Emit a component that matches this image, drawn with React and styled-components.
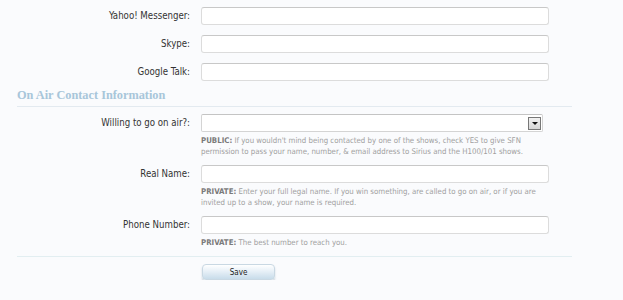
import React from 'react';
import styled, { createGlobalStyle } from 'styled-components';

const GlobalStyle = createGlobalStyle`
  body {
    margin: 0;
    background: #fafbfd;
    font-family: "DejaVu Sans Condensed", "Liberation Sans", sans-serif;
  }
`;

const Page = styled.div`
  width: 555px;
  padding: 7px 0 0 17px;
`;

const Row = styled.div`
  display: grid;
  grid-template-columns: 173px 348px;
  column-gap: 11px;
  align-items: start;
  margin-bottom: ${p => p.gap || 10}px;
`;

const Label = styled.label`
  grid-column: 1;
  text-align: right;
  font-size: 9.6px;
  line-height: 18px;
  color: #333;
`;

const Input = styled.input`
  grid-column: 2;
  box-sizing: border-box;
  width: 348px;
  height: 18px;
  margin: 0;
  border: 1px solid #dcdcdc;
  border-top-color: #c8c8c8;
  border-radius: 3px;
  background: #fff;
  outline: none;
`;

const SelectBox = styled.div`
  grid-column: 2;
  box-sizing: border-box;
  width: 342px;
  height: 18px;
  border: 1px solid #d4d4d4;
  border-top-color: #c4c4c4;
  border-radius: 2px;
  background: #fff;
  display: flex;
  justify-content: flex-end;
  align-items: center;
  padding-right: 1px;
`;

const Arrow = styled.div`
  box-sizing: border-box;
  width: 13px;
  height: 13px;
  border: 1px solid #777;
  background: linear-gradient(#f2f2f2, #d6d6d6);
  display: flex;
  align-items: center;
  justify-content: center;
  &::after {
    content: '';
    border-left: 3px solid transparent;
    border-right: 3px solid transparent;
    border-top: 3px solid #111;
  }
`;

const Help = styled.p`
  grid-column: 2;
  margin: 4px 0 0;
  font-size: 7.8px;
  line-height: 10.5px;
  color: #a0a0a0;
  b {
    color: #7a7a7a;
  }
`;

const Heading = styled.h3`
  margin: 0 0 7px;
  padding: 0 0 3px;
  border-bottom: 1px solid #e3eaf0;
  font-family: "Liberation Serif", "Times New Roman", serif;
  font-weight: bold;
  font-size: 12.3px;
  line-height: 15px;
  color: #a8c6da;
`;

const Divider = styled.div`
  height: 1px;
  background: #e2eef1;
  margin: 0 0 3px;
`;

const ButtonRow = styled.div`
  padding-left: 185px;
`;

const SaveButton = styled.button`
  width: 73px;
  height: 16px;
  padding: 0;
  border: 1px solid #c9d8e3;
  border-radius: 4px;
  background: linear-gradient(#ffffff, #e7f0f7 45%, #c8dcea);
  box-shadow: 0 2px 2px rgba(110, 140, 160, 0.35);
  font-family: "DejaVu Sans Condensed", "Liberation Sans", sans-serif;
  font-size: 8px;
  color: #222;
`;

const App = () => (
  <>
    <GlobalStyle />
    <Page>
      <Row>
        <Label>Yahoo! Messenger:</Label>
        <Input />
      </Row>
      <Row>
        <Label>Skype:</Label>
        <Input />
      </Row>
      <Row gap={7}>
        <Label>Google Talk:</Label>
        <Input />
      </Row>

      <Heading>On Air Contact Information</Heading>

      <Row gap={8}>
        <Label>Willing to go on air?:</Label>
        <SelectBox>
          <Arrow />
        </SelectBox>
        <Help>
          <b>PUBLIC:</b> If you wouldn't mind being contacted by one of the shows, check YES to give SFN
          permission to pass your name, number, &amp; email address to Sirius and the H100/101 shows.
        </Help>
      </Row>
      <Row gap={8}>
        <Label>Real Name:</Label>
        <Input />
        <Help>
          <b>PRIVATE:</b> Enter your full legal name. If you win something, are called to go on air, or if you are
          invited up to a show, your name is required.
        </Help>
      </Row>
      <Row gap={7}>
        <Label>Phone Number:</Label>
        <Input />
        <Help>
          <b>PRIVATE:</b> The best number to reach you.
        </Help>
      </Row>

      <Divider />
      <ButtonRow>
        <SaveButton>Save</SaveButton>
      </ButtonRow>
    </Page>
  </>
);

export default App;
